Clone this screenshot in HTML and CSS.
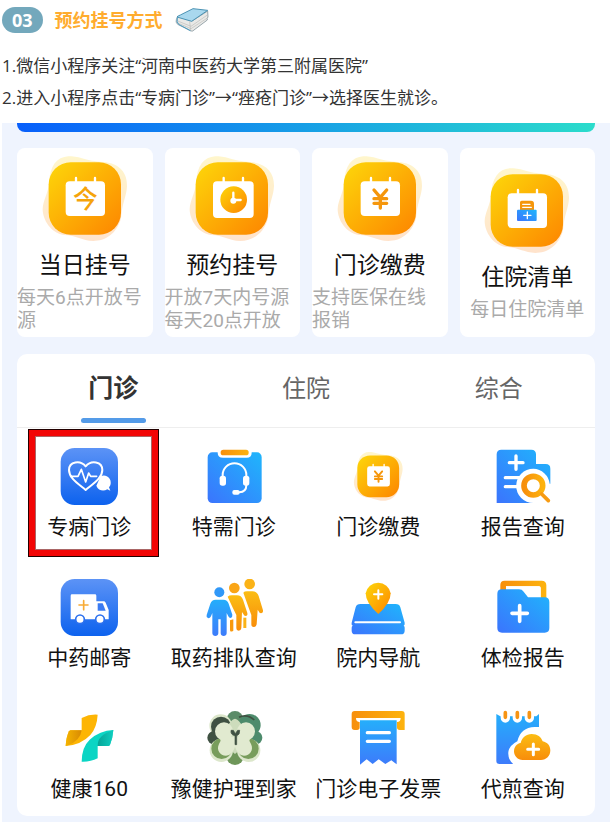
FILE: index.html
```html
<!DOCTYPE html>
<html lang="zh-CN">
<head>
<meta charset="utf-8">
<meta name="viewport" content="width=device-width, initial-scale=1">
<title>预约挂号方式</title>
<link rel="stylesheet" href="styles.css">
</head>
<body>
<svg class="defs" aria-hidden="true">
  <defs>
    <linearGradient id="gold" x1="0" y1="0" x2="1" y2="1"><stop offset="0" stop-color="#fdd70a"/><stop offset="1" stop-color="#fd8500"/></linearGradient>
    <linearGradient id="orange" x1="0" y1="0" x2="1" y2="0"><stop offset="0" stop-color="#f78f0c"/><stop offset="1" stop-color="#fdb30e"/></linearGradient>
    <linearGradient id="amber" x1="0" y1="0" x2="0" y2="1"><stop offset="0" stop-color="#fbbd14"/><stop offset="1" stop-color="#f88d0a"/></linearGradient>
    <linearGradient id="blue" x1="0" y1="1" x2="1" y2="0"><stop offset="0" stop-color="#3b74fd"/><stop offset="1" stop-color="#1fb6fc"/></linearGradient>
    <linearGradient id="sky" x1="0" y1="1" x2="0" y2="0"><stop offset="0" stop-color="#3d7bfb"/><stop offset="1" stop-color="#25aefb"/></linearGradient>
    <linearGradient id="tile" x1="0" y1="0" x2="0" y2="1"><stop offset="0" stop-color="#5c93f6"/><stop offset="1" stop-color="#0d62ee"/></linearGradient>
    <linearGradient id="halo" x1="0" y1="0" x2="0" y2="1"><stop offset="0" stop-color="#fff6cc"/><stop offset="1" stop-color="#ffe3cc"/></linearGradient>
    <linearGradient id="fold" x1="0" y1="0" x2="1" y2="0"><stop offset="0" stop-color="#f5b400"/><stop offset="1" stop-color="#d88a04"/></linearGradient>
    <linearGradient id="foldTeal" x1="0" y1="0" x2="1" y2="0"><stop offset="0" stop-color="#06a497"/><stop offset="1" stop-color="#0fcfc0"/></linearGradient>
    <symbol id="badge" viewBox="0 0 270 270">
      <path d="M85 10C120 9 135 24 190 27C240 31 262 60 261 100C260 130 246 150 243 196C230 244 195 264 160 264C125 263 110 247 72 246C32 240 8 200 8 168C9 142 25 120 27 90C30 38 50 12 85 10Z" fill="url(#halo)"/>
      <rect x="26" y="28" width="217" height="217" rx="66" fill="url(#gold)"/>
    </symbol>
    <symbol id="calendar" viewBox="0 0 270 270">
      <rect x="77" y="85" width="118" height="104" rx="12" fill="#fff"/>
      <path d="M108 75v16M165 75v16" stroke="#fff" stroke-width="7" stroke-linecap="round"/>
    </symbol>
    <symbol id="fee" viewBox="0 0 270 270">
      <use href="#badge" width="270" height="270"/>
      <use href="#calendar" width="270" height="270"/>
      <path d="M117 111l19 22 19-22M136 133v32M117 137h38M117 151h38" fill="none" stroke="#f5960b" stroke-width="10" stroke-linecap="round" stroke-linejoin="round"/>
    </symbol>
  </defs>
</svg>

<article class="article">
  <header class="heading">
    <span class="heading-number">03</span>
    <h1 class="heading-title">预约挂号方式</h1>
    <svg class="heading-book" viewBox="522 20 102 78" aria-hidden="true">
      <path d="M526 58L530 48 573 62 620 32 621 50Q617 54 619 59L575 92Q570 93 566 90L530 72Q523 66 526 58Z" fill="#e9e9e7" stroke="#6b7f88" stroke-width="2"/>
      <path d="M530 62l40 16 49-34M530 68l40 17 49-32M566 64l3 26" fill="none" stroke="#bcbcba" stroke-width="2"/>
      <path d="M529 51Q526 67 533 72L568 91" fill="none" stroke="#4b9dc4" stroke-width="3"/>
      <path d="M528 50Q530 47 538 44L576 25 620 30 572 63Z" fill="#a9d8ee" stroke="#4b93b4" stroke-width="3" stroke-linejoin="round"/>
    </svg>
  </header>
  <p class="step">1.微信小程序关注“河南中医药大学第三附属医院”</p>
  <p class="step">2.进入小程序点击“专病门诊”→“痤疮门诊”→选择医生就诊。</p>
</article>

<main class="app">
  <div class="banner"></div>

  <nav class="cards" aria-label="挂号缴费">
    <a class="card" href="#">
      <svg class="card-icon" viewBox="0 0 270 270" aria-hidden="true">
        <use href="#badge"/><use href="#calendar"/>
        <text x="136" y="164" class="icon-char">今</text>
      </svg>
      <span class="card-title">当日挂号</span>
      <span class="card-note">每天6点开放号<br>源</span>
    </a>
    <a class="card" href="#">
      <svg class="card-icon" viewBox="0 0 270 270" aria-hidden="true">
        <use href="#badge"/>
        <rect x="78" y="85" width="122" height="110" rx="12" fill="#fff"/>
        <path d="M110 75v16M168 75v16" stroke="#fff" stroke-width="7" stroke-linecap="round"/>
        <circle cx="140" cy="140" r="40" fill="url(#gold)"/>
        <path d="M139 119v22h22" fill="none" stroke="#fff" stroke-width="7" stroke-linecap="round"/>
        <circle cx="139" cy="143" r="9" fill="#fff"/>
      </svg>
      <span class="card-title">预约挂号</span>
      <span class="card-note">开放7天内号源<br>每天20点开放</span>
    </a>
    <a class="card" href="#">
      <svg class="card-icon" viewBox="0 0 270 270" aria-hidden="true"><use href="#fee"/></svg>
      <span class="card-title">门诊缴费</span>
      <span class="card-note">支持医保在线<br>报销</span>
    </a>
    <a class="card" href="#">
      <svg class="card-icon" viewBox="0 0 270 270" aria-hidden="true">
        <use href="#badge"/><use href="#calendar"/>
        <path d="M114 136v-24q0-5 5-5h28q9 0 9 9v20z" fill="#f5960b"/>
        <path d="M122 118h22M122 127h26" stroke="#fff" stroke-width="4" stroke-linecap="round"/>
        <rect x="105" y="134" width="59" height="34" rx="3" fill="url(#blue)"/>
        <path d="M136 141v20M125 151h22" stroke="#fff" stroke-width="4" stroke-linecap="round"/>
      </svg>
      <span class="card-title">住院清单</span>
      <span class="card-note">每日住院清单</span>
    </a>
  </nav>

  <section class="services">
    <div class="tabs" role="tablist">
      <button class="tab tab-active" type="button" role="tab" aria-selected="true">门诊</button>
      <button class="tab" type="button" role="tab" aria-selected="false">住院</button>
      <button class="tab" type="button" role="tab" aria-selected="false">综合</button>
    </div>
    <div class="grid">
      <a class="item item-marked" href="#">
        <svg class="item-icon" viewBox="121 84 174 174" aria-hidden="true">
          <rect x="123" y="84" width="172" height="171" rx="42" fill="url(#tile)"/>
          <path d="M198 210C174 190 148 174 148 150C148 124 182 119 198 139C214 119 248 124 248 150C248 174 222 190 198 210Z" fill="none" stroke="#fff" stroke-width="6" stroke-linejoin="round"/>
          <path d="M153 169h22l10-21 13 38 9-27 6 10h18" fill="none" stroke="#fff" stroke-width="5" stroke-linecap="round" stroke-linejoin="round"/>
          <path d="M230 197l13-28c15-8 33 4 30 23q-1 6-5 10l4 10-9-4c-12 7-27 4-33-11z" fill="#fff"/>
        </svg>
        <span class="item-label">专病门诊</span>
      </a>
      <a class="item" href="#">
        <svg class="item-icon" viewBox="554 84 174 174" aria-hidden="true">
          <rect x="562" y="97" width="162" height="152" rx="14" fill="url(#blue)"/>
          <path d="M592 95h102v3q0 15-15 15h-71q-16 0-16-15z" fill="#fff"/>
          <rect x="601" y="89" width="84" height="17" rx="8" fill="url(#orange)"/>
          <path d="M607 172v-7a35 35 0 0 1 71 0v30q0 21-21 22h-10" fill="none" stroke="#fff" stroke-width="6"/>
          <rect x="598" y="167" width="19" height="30" rx="8" fill="#fff"/>
          <rect x="668" y="167" width="19" height="30" rx="8" fill="#fff"/>
          <rect x="636" y="210" width="22" height="14" rx="6" fill="#fff"/>
        </svg>
        <span class="item-label">特需门诊</span>
      </a>
      <a class="item" href="#">
        <svg class="item-icon" viewBox="118 84 174 174" aria-hidden="true"><use href="#fee" x="128" y="90" width="156" height="156"/></svg>
        <span class="item-label">门诊缴费</span>
      </a>
      <a class="item" href="#">
        <svg class="item-icon" viewBox="551 84 174 174" aria-hidden="true">
          <path d="M573 89h90q14 0 14 14v29h29q14 0 14 14v103H559V103q0-14 14-14z" fill="url(#blue)"/>
          <path d="M617 108v40M597 128h41" stroke="#fff" stroke-width="10" stroke-linecap="round"/>
          <path d="M585 173h50M585 200h46" stroke="#fff" stroke-width="10" stroke-linecap="round"/>
          <path d="M669 146a51 51 0 1 0 0 103h56v-58h-7a51 51 0 0 0-49-45z" fill="#fff"/>
          <circle cx="669" cy="197" r="28" fill="none" stroke="url(#orange)" stroke-width="17"/>
          <path d="M694 222l20 20" stroke="#f79b12" stroke-width="11" stroke-linecap="round"/>
        </svg>
        <span class="item-label">报告查询</span>
      </a>

      <a class="item" href="#">
        <svg class="item-icon" viewBox="121 57 174 174" aria-hidden="true">
          <rect x="123" y="57" width="172" height="171" rx="42" fill="url(#tile)"/>
          <path d="M157 103h69q4 0 4 4v17h22q4 0 6 4l9 22v28H153v-71q0-4 4-4z" fill="#fff"/>
          <path d="M234 130h15l9 22h-24z" fill="#3b7bf2"/>
          <circle cx="181" cy="178" r="13" fill="#fff" stroke="#2b70ef" stroke-width="5"/>
          <circle cx="241" cy="178" r="13" fill="#fff" stroke="#2b70ef" stroke-width="5"/>
          <path d="M192 122v27M178 135h27" stroke="#f8ab35" stroke-width="5" stroke-linecap="round"/>
        </svg>
        <span class="item-label">中药邮寄</span>
      </a>
      <a class="item" href="#">
        <svg class="item-icon" viewBox="554 57 174 174" aria-hidden="true">
          <circle cx="688" cy="72" r="16" fill="#fbb317"/>
          <path d="M669 98q3-4 11-4h16q14 0 19 14l13 43q1 8-6 9-5 0-7-6l-3-5-3 44q-1 8-9 8-7 0-7-8v-28l-8-22z" fill="url(#amber)"/>
          <path d="M669 173h9v31h-9z" fill="#fbb317"/>
          <circle cx="642" cy="84" r="16" fill="#faa516"/>
          <path d="M622 110q4-4 12-4h16q13 0 18 13l13 40q2 8-5 9-5 0-7-6l-4-6-2 49q-1 7-8 7-7 0-7-7v-40l-10-20z" fill="url(#amber)"/>
          <path d="M629 181l10-3v34q-10 6-10-2z" fill="#f9990c"/>
          <circle cx="597" cy="97" r="15" fill="#3098f8"/>
          <path d="M586 119h23q12 0 16 12l11 33q1 8-5 10-5 0-7-5l-5-10v61q-1 8-9 8-8 0-9-8v-42h-7v42q-1 8-9 8-8 0-9-8v-61l-4 10q-3 7-9 5-6-2-4-9l11-34q4-12 16-12z" fill="url(#sky)"/>
        </svg>
        <span class="item-label">取药排队查询</span>
      </a>
      <a class="item" href="#">
        <svg class="item-icon" viewBox="118 57 174 174" aria-hidden="true">
          <path d="M152 132h106q11 0 14 10l13 46q1 7-3 9 3 2 3 6v9q0 11-11 11H137q-11 0-11-11v-9q0-4 3-6-5-3-3-9l12-46q3-10 14-10z" fill="url(#blue)"/>
          <path d="M137 187h134" stroke="#fff" stroke-width="6" stroke-linecap="round"/>
          <path d="M206 162q-38-33-38-62a38 38 0 0 1 75 0q0 29-37 62z" fill="url(#gold)"/>
          <path d="M206 91v25M193 103h25" stroke="#fff" stroke-width="6" stroke-linecap="round"/>
        </svg>
        <span class="item-label">院内导航</span>
      </a>
      <a class="item" href="#">
        <svg class="item-icon" viewBox="551 57 174 174" aria-hidden="true">
          <path d="M570 96V75q0-13 13-13h111q14 0 14 14v42h-17V84q0-5-5-5h-99v17z" fill="url(#orange)"/>
          <path d="M587 79h99q5 0 5 5v34h-40l-13-30h-51z" fill="#fff"/>
          <path d="M575 88h51q9 0 14 7l13 17h50q14 0 14 14v78q0 14-14 14H575q-14 0-14-14V101q0-13 14-13z" fill="url(#blue)"/>
          <path d="M628 137v47M605 160h46" stroke="#fff" stroke-width="11" stroke-linecap="round"/>
        </svg>
        <span class="item-label">体检报告</span>
      </a>

      <a class="item" href="#">
        <svg class="item-icon" viewBox="181 60 174 174" aria-hidden="true">
          <path d="M198 168Q200 140 208 124Q210 121 214 121H246V84Q270 72 294 74Q292 112 272 135Q244 165 198 168Z" fill="#fdb504"/>
          <path d="M212 121H246Q242 152 205 166L198 168Q200 140 208 124Z" fill="url(#fold)"/>
          <path d="M246 215Q246 172 270 149Q300 122 341 120Q339 146 331 164Q329 168 325 168H294V205Q272 216 246 215Z" fill="#0bd5c4"/>
          <path d="M294 168Q292 136 341 120Q339 146 331 164Q329 168 325 168Z" fill="url(#foldTeal)"/>
        </svg>
        <span class="item-label">健康160</span>
      </a>
      <a class="item" href="#">
        <svg class="item-icon" viewBox="614 60 174 174" aria-hidden="true">
          <circle cx="704" cy="88" r="25" fill="#5b8b68"/>
          <circle cx="661" cy="107" r="34" fill="#dce7cb"/>
          <circle cx="662" cy="110" r="30" fill="#3f5142"/>
          <circle cx="641" cy="143" r="20" fill="#3f5142"/>
          <circle cx="748" cy="105" r="33" fill="#4d8b6c"/>
          <circle cx="766" cy="143" r="20" fill="#4d8b6c"/>
          <path d="M716 82q24-12 46 8" fill="none" stroke="#3f5142" stroke-width="5"/>
          <circle cx="704" cy="198" r="27" fill="#6e9659"/>
          <circle cx="663" cy="181" r="35" fill="#dce7cb"/>
          <circle cx="745" cy="181" r="35" fill="#dce7cb"/>
          <circle cx="664" cy="176" r="31" fill="#789d5c"/>
          <circle cx="744" cy="176" r="31" fill="#789d5c"/>
          <path d="M692 94q12-16 24 0l24 30-4 40-32 28-32-28-4-40z" fill="#cddcbc"/>
          <circle cx="671" cy="124" r="27" fill="#e1ead0"/>
          <circle cx="737" cy="124" r="27" fill="#e1ead0"/>
          <path d="M660 140h88q-3 12 4 22c9 18-3 35-21 35q-20-2-27-27-7 25-27 27c-18 0-30-17-21-35q7-10 4-22z" fill="#e1ead0"/>
          <path d="M704 164v-27q-14-2-12-16h7l6 10 7-10h6q1 14-9 16v27z" fill="#3f5142" stroke="#3f5142" stroke-width="2"/>
        </svg>
        <span class="item-label">豫健护理到家</span>
      </a>
      <a class="item" href="#">
        <svg class="item-icon" viewBox="118 60 174 174" aria-hidden="true">
          <path d="M135 63h141q9 0 9 9v48h-15q-8 0-8-8V90H150v22q0 8-8 8h-7q-9 0-9-9V72q0-9 9-9z" fill="url(#orange)"/>
          <path d="M139 84h134q0 12-11 12H150q-11 0-11-12z" fill="#fff"/>
          <path d="M151 91h110v132l-16-12-18 11-20-14-18 14-18-14-20 16z" fill="url(#sky)"/>
          <path d="M173 128h66M173 154h66" stroke="#fff" stroke-width="10" stroke-linecap="round"/>
        </svg>
        <span class="item-label">门诊电子发票</span>
      </a>
      <a class="item" href="#">
        <svg class="item-icon" viewBox="551 60 174 174" aria-hidden="true">
          <path d="M558 72l12 7h108l8-7v150H567q-9 0-9-9z" fill="url(#sky)"/>
          <path d="M585 66v18M621 66v18M657 66v18" stroke="#fff" stroke-width="28" stroke-linecap="round"/>
          <path d="M585 68v14M621 68v14M657 68v14" stroke="#f79413" stroke-width="11" stroke-linecap="round"/>
          <path d="M612 224q-20-13-18-38 3-20 27-32 10-42 52-43h25v113z" fill="#fff"/>
          <path d="M637 210c-15 0-26-12-26-26 0-13 8-23 20-25 4-16 16-27 33-27 18 0 28 9 33 22 14 3 23 13 23 27 0 17-12 29-28 29z" fill="url(#amber)"/>
          <path d="M669 162v32M652 178h33" stroke="#fff" stroke-width="9" stroke-linecap="round"/>
        </svg>
        <span class="item-label">代煎查询</span>
      </a>
    </div>
  </section>
</main>
</body>
</html>
```

FILE: styles.css
```css
* {
  box-sizing: border-box;
}

body {
  margin: 0;
  background: #fff;
  color: #333;
  font-family: "Open Sans", "Noto Sans CJK SC", sans-serif;
}

a {
  color: inherit;
  text-decoration: none;
}

.defs {
  position: absolute;
  width: 0;
  height: 0;
}

.article {
  padding: 6px 2px 9px;
}

.heading {
  display: flex;
  align-items: center;
  height: 28px;
  margin-bottom: 16px;
}

.heading-number {
  padding: 0 10px;
  border-radius: 13px;
  background: #73a8bc;
  color: #fff;
  font-size: 18px;
  font-weight: 700;
  line-height: 26px;
}

.heading-title {
  margin: 0 12px;
  color: #ffac2e;
  font-size: 18px;
  font-weight: 700;
  line-height: 26px;
}

.heading-book {
  width: 34px;
  height: 26px;
}

.step {
  margin: 0;
  font-size: 17px;
  line-height: 32px;
}

.app {
  margin: 0 1px 0 2px;
  padding: 0 15px 6px;
  background: #eff4fe;
  font-family: Roboto, "Noto Sans CJK SC", sans-serif;
}

.banner {
  height: 9px;
  border-radius: 0 0 8px 8px;
  background: linear-gradient(90deg, #085ffb, #179fe6 50%, #2bdccb);
}

.cards {
  display: grid;
  grid-template-columns: repeat(4, 1fr);
  gap: 12px;
  padding: 16px 0 17px;
}

.card {
  display: flex;
  flex-direction: column;
  align-items: center;
  justify-content: center;
  padding: 5px 0;
  border-radius: 8px;
  background: #fff;
}

.card-icon {
  width: 90px;
  height: 90px;
}

.icon-char {
  fill: #f5a40b;
  font-size: 74px;
  font-weight: 500;
  text-anchor: middle;
}

.card-title {
  margin: 6px 0 3px;
  color: #111;
  font-size: 23px;
  line-height: 34px;
}

.card-note {
  color: #aaa;
  font-size: 19px;
  line-height: 23px;
  align-self: flex-start;
}

.card:last-child .card-note {
  align-self: center;
}

.services {
  border-radius: 10px;
  background: #fff;
}

.tabs {
  display: grid;
  grid-template-columns: repeat(3, 1fr);
  border-bottom: 1px solid #eee;
}

.tab {
  display: flex;
  flex-direction: column;
  align-items: center;
  height: 73px;
  padding: 17px 0 0;
  border: 0;
  background: none;
  color: #666;
  font-family: inherit;
  font-size: 24px;
  line-height: 36px;
}

.tab-active {
  color: #333;
  font-size: 25px;
  font-weight: 700;
}

.tab-active::after {
  width: 65px;
  height: 5px;
  margin-top: 11px;
  border-radius: 3px;
  background: #549be8;
  content: "";
}

.grid {
  display: grid;
  grid-template-columns: repeat(4, 1fr);
  row-gap: 37px;
  padding: 20px 0 12px;
}

.item {
  position: relative;
  display: flex;
  flex-direction: column;
  align-items: center;
}

.item-icon {
  width: 58px;
  height: 58px;
}

.item-label {
  margin-top: 6px;
  color: #111;
  font-size: 21px;
  line-height: 30px;
  white-space: nowrap;
}

.item-marked::after {
  position: absolute;
  inset: -18px 4px -14px 12px;
  border: 6px solid #f20505;
  outline: 1px solid #200;
  box-shadow: inset 0 0 0 1px #a66;
  content: "";
}
```
